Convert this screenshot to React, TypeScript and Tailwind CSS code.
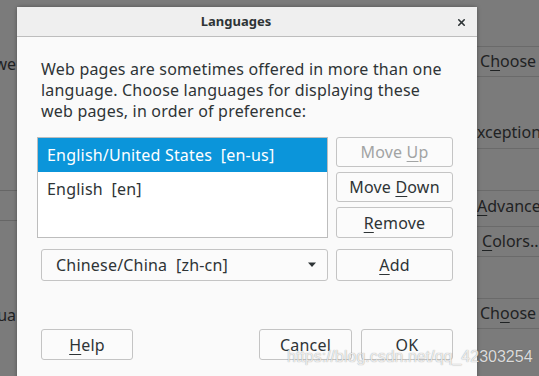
import { X } from "lucide-react";

const font = { fontFamily: '"Noto Sans", "Open Sans", sans-serif' };

function Btn({ children, disabled, className = "" }: { children: React.ReactNode; disabled?: boolean; className?: string }) {
  return (
    <button
      className={
        "flex items-center justify-center rounded-[3px] border border-[#c4c4c4] bg-[#fbfbfb] text-[16px] tracking-[0.2px] " +
        (disabled ? "text-[#a2a4a4] " : "text-[#2e3436] ") +
        className
      }
    >
      {children}
    </button>
  );
}

function U({ children }: { children: React.ReactNode }) {
  return <span className="underline decoration-1 underline-offset-[3px]">{children}</span>;
}

export default function App() {
  return (
    <div className="relative h-[376px] w-[539px] overflow-hidden bg-[#7b7b7b]" style={font}>
      {/* dimmed window behind the dialog */}
      <div className="absolute left-0 top-0 h-full w-full text-[16px] text-[#1f2223]">
        <span className="absolute right-[523px] top-[52px]">we</span>
        <div className="absolute left-0 top-[190px] h-[31px] w-[17px] border-y border-[#666]" />
        <span className="absolute right-[523px] top-[303px]">ua</span>

        <div className="absolute left-[470px] top-[46px] h-[31px] w-[90px] border-y border-[#6a6a6a] pl-[10px] pt-[2px]">
          C<U>h</U>oose
        </div>
        <span className="absolute left-[468px] top-[120px]">Exception</span>
        <div className="absolute left-[470px] top-[148px] h-[43px] w-[90px] border-y border-[#6a6a6a]" />
        <div className="absolute left-[470px] top-[194px] w-[90px] pl-[7px]">
          <U>A</U>dvanced
        </div>
        <div className="absolute left-[470px] top-[226px] h-[31px] w-[90px] border-y border-[#6a6a6a] pl-[12px] pt-[2px]">
          <U>C</U>olors...
        </div>
        <div className="absolute left-[470px] top-[298px] h-[31px] w-[90px] border-y border-[#6a6a6a] pl-[10px] pt-[2px]">
          Ch<U>o</U>ose
        </div>
      </div>

      {/* dialog */}
      <div className="absolute left-[17px] top-[7px] flex h-[400px] w-[460px] flex-col rounded-t-[3px] bg-[#fafafa] shadow-[0_0_4px_rgba(0,0,0,0.35)]">
        <div className="relative flex h-[30px] shrink-0 items-center justify-center border-b border-[#bdbdbd] bg-[#efefef] pr-[22px] text-[13px] font-bold text-[#2e3436]">
          Languages
          <X className="absolute right-[10px] top-[10px]" size={11} strokeWidth={3.5} color="#2e3436" />
        </div>

        <div className="flex flex-col pl-[20px] pr-[24px]">
          <p className="mt-[22px] pl-[4px] text-[16px] leading-[21px] tracking-[0.2px] text-[#2e3436]">
            Web pages are sometimes offered in more than one language. Choose languages for displaying these web pages, in order of preference:
          </p>

          <div className="mt-[15px] flex gap-[8px]">
            <div className="flex h-[101px] w-[291px] flex-col border border-[#bdbdbd] bg-white text-[16px] tracking-[0.2px]">
              <div className="flex h-[34px] items-center bg-[#0b95da] pl-[9px] text-white">
                English/United States&nbsp;&nbsp;[en-us]
              </div>
              <div className="flex h-[34px] items-center pl-[9px] text-[#2e3436]">English&nbsp;&nbsp;[en]</div>
            </div>
            <div className="flex flex-col gap-[5px]">
              <Btn disabled className="h-[30px] w-[117px]">
                Move&nbsp;<U>U</U>p
              </Btn>
              <Btn className="h-[30px] w-[117px]">
                Move&nbsp;<U>D</U>own
              </Btn>
              <Btn className="h-[31px] w-[117px]">
                <U>R</U>emove
              </Btn>
            </div>
          </div>

          <div className="mt-[11px] flex gap-[8px] pl-[4px]">
            <button className="flex h-[32px] w-[287px] items-center justify-between rounded-[3px] border border-[#c4c4c4] bg-[#fbfbfb] pl-[14px] pr-[10px] text-[16px] tracking-[0.2px] text-[#2e3436]">
              <span>Chinese/China&nbsp;&nbsp;[zh-cn]</span>
              <svg width="10" height="6" viewBox="0 0 10 6">
                <path d="M1 0.5h8L5 5z" fill="#2e3436" />
              </svg>
            </button>
            <Btn className="h-[32px] w-[117px]">
              <U>A</U>dd
            </Btn>
          </div>

          <div className="mt-[48px] flex pl-[4px]">
            <Btn className="h-[31px] w-[92px]">
              <U>H</U>elp
            </Btn>
            <div className="flex-1" />
            <div className="flex gap-[9px]">
              <Btn className="h-[31px] w-[93px]">Cancel</Btn>
              <Btn className="h-[31px] w-[92px]">OK</Btn>
            </div>
          </div>
        </div>
      </div>

      <span
        className="absolute left-[287px] top-[345px] text-[16px] text-white/80"
        style={{ fontFamily: '"Liberation Sans", Arial, sans-serif', textShadow: "0 0 1px rgba(0,0,0,0.45)" }}
      >
        https://blog.csdn.net/qq_42303254
      </span>
    </div>
  );
}
